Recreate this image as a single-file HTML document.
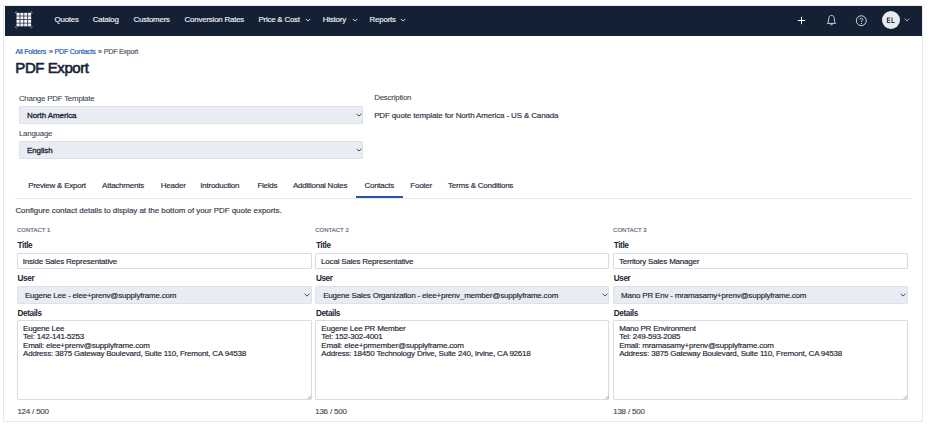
<!DOCTYPE html>
<html><head><meta charset="utf-8">
<style>
*{box-sizing:border-box;margin:0;padding:0}
html,body{width:933px;height:427px;overflow:hidden;background:#fff;font-family:"Liberation Sans",sans-serif;}
.a{position:absolute;white-space:nowrap;line-height:1}
#frame{position:absolute;left:3.1px;top:5.2px;width:920.2px;height:416.4px;border:1px solid #e7e8ea;}
#nav{position:absolute;left:4.7px;top:6.1px;width:917.1px;height:29.5px;background:#142135;}
.nv{color:#eef1f5;font-size:7.9px;letter-spacing:-0.2px;top:15.6px;-webkit-text-stroke:0.15px #eef1f5}
.chev{position:absolute;width:3px;height:3px;border-right:1px solid #e6e9ee;border-bottom:1px solid #e6e9ee;transform:rotate(45deg)}
.bc{font-size:7.2px;top:47.8px;letter-spacing:-0.3px;-webkit-text-stroke:0.2px currentColor}
.lbl{font-size:7.9px;color:#3c4350;letter-spacing:-0.22px;-webkit-text-stroke:0.08px #3c4350}
.sel{position:absolute;background:#e9edf3;border:1px solid #dde2ea;border-radius:1px}
.selt{font-size:8px;color:#1c2434;letter-spacing:-0.1px;-webkit-text-stroke:0.3px #1c2434}
.tab{font-size:8px;color:#1f2a3d;top:182px;letter-spacing:-0.24px;-webkit-text-stroke:0.15px #1f2a3d}
.ct{font-size:5.9px;color:#5a6a82;letter-spacing:0.08px;top:227.9px;-webkit-text-stroke:0.18px #5a6a82}
.fl{font-size:8.2px;color:#1d2536;font-weight:bold;letter-spacing:-0.4px}
.inp{position:absolute;background:#fff;border:1px solid #d9dde3;border-radius:1px}
.it{font-size:8px;color:#1f2634;letter-spacing:-0.2px;-webkit-text-stroke:0.16px #1f2634}
.cnt{font-size:8px;color:#474e5b;letter-spacing:-0.3px;word-spacing:0.3px;top:407.9px;-webkit-text-stroke:0.16px #474e5b}
</style></head><body>
<div id="frame"></div>
<div id="nav"></div>
<!-- logo -->
<svg class="a" style="left:14px;top:10px" width="20" height="20" viewBox="0 0 20 20">
  <g fill="#f4f6f9"><rect x="2.50" y="2.80" width="3.1" height="2.9"/><rect x="6.35" y="2.80" width="3.1" height="2.9"/><rect x="10.20" y="2.80" width="3.1" height="2.9"/><rect x="14.05" y="2.80" width="3.1" height="2.9"/><rect x="2.50" y="6.35" width="3.1" height="2.9"/><rect x="6.35" y="6.35" width="3.1" height="2.9"/><rect x="10.20" y="6.35" width="3.1" height="2.9"/><rect x="14.05" y="6.35" width="3.1" height="2.9"/><rect x="2.50" y="9.90" width="3.1" height="2.9"/><rect x="6.35" y="9.90" width="3.1" height="2.9"/><rect x="10.20" y="9.90" width="3.1" height="2.9"/><rect x="14.05" y="9.90" width="3.1" height="2.9"/><rect x="2.50" y="13.45" width="3.1" height="2.9"/><rect x="6.35" y="13.45" width="3.1" height="2.9"/><rect x="10.20" y="13.45" width="3.1" height="2.9"/><rect x="14.05" y="13.45" width="3.1" height="2.9"/></g>
  <g stroke="#9aa3b3" stroke-width="0.8" fill="none"><path d="M1.2 3.3A1.7 1.7 0 0 1 2.9 1.6"/><path d="M16.5 1.6A1.7 1.7 0 0 1 18.2 3.3"/><path d="M1.2 16.4A1.7 1.7 0 0 0 2.9 18.1"/><path d="M16.5 18.1A1.7 1.7 0 0 0 18.2 16.4"/></g>
</svg>
<span class="a nv" style="left:54.5px">Quotes</span>
<span class="a nv" style="left:92.8px">Catalog</span>
<span class="a nv" style="left:133.5px">Customers</span>
<span class="a nv" style="left:184.6px">Conversion Rates</span>
<span class="a nv" style="left:258.4px">Price &amp; Cost</span>
<svg class="a" style="left:304.7px;top:17.8px" width="6" height="4" viewBox="0 0 6 4"><path d="M0.8 0.9L3 3.1L5.2 0.9" stroke="#e3e7ee" stroke-width="0.9" fill="none"/></svg>
<span class="a nv" style="left:322.8px">History</span>
<svg class="a" style="left:351.6px;top:17.8px" width="6" height="4" viewBox="0 0 6 4"><path d="M0.8 0.9L3 3.1L5.2 0.9" stroke="#e3e7ee" stroke-width="0.9" fill="none"/></svg>
<span class="a nv" style="left:369.6px">Reports</span>
<svg class="a" style="left:399.8px;top:17.8px" width="6" height="4" viewBox="0 0 6 4"><path d="M0.8 0.9L3 3.1L5.2 0.9" stroke="#e3e7ee" stroke-width="0.9" fill="none"/></svg>
<!-- right icons -->
<svg class="a" style="left:796px;top:15px" width="11" height="11" viewBox="0 0 11 11"><path d="M5.5 1.8V9.2M1.8 5.5H9.2" stroke="#fff" stroke-width="1"/></svg>
<svg class="a" style="left:825px;top:14px" width="13" height="13" viewBox="0 0 13 13"><path d="M6.5 1.4C4.6 1.4 3.8 2.8 3.7 4.6L3.5 7.3C3.4 8.3 2.8 8.9 2.3 9.4H10.7C10.2 8.9 9.6 8.3 9.5 7.3L9.3 4.6C9.2 2.8 8.4 1.4 6.5 1.4Z" stroke="#e9ecf1" stroke-width="0.85" fill="none" stroke-linejoin="round"/><path d="M5.5 9.8A1 1 0 0 0 7.5 9.8" stroke="#e9ecf1" stroke-width="0.85" fill="none"/></svg>
<svg class="a" style="left:855px;top:14.5px" width="13" height="13" viewBox="0 0 13 13"><circle cx="6.3" cy="5.7" r="4.95" stroke="#e9ecf1" stroke-width="0.9" fill="none"/><path d="M4.8 4.6C4.8 3.7 5.5 3.2 6.3 3.2S7.8 3.7 7.8 4.5C7.8 5.5 6.4 5.7 6.4 7" stroke="#e9ecf1" stroke-width="0.9" fill="none"/><circle cx="6.4" cy="8.4" r="0.55" fill="#e9ecf1"/></svg>
<div class="a" style="left:881.8px;top:10.7px;width:18px;height:18px;border-radius:50%;background:#e8ebf0"></div>
<svg class="a" style="left:886px;top:17px" width="10" height="7" viewBox="0 0 10 7"><path d="M1.4 0.5V5.9M0.9 1H4.3M1.4 3.2H4M0.9 5.4H4.4M6 0.5V5.9M5.5 5.4H8.7" stroke="#2a3242" stroke-width="1.05" fill="none"/></svg>
<svg class="a" style="left:903.5px;top:18.2px" width="6" height="4" viewBox="0 0 6 4"><path d="M0.7 0.7L3 2.9L5.3 0.7" stroke="#c3c9d3" stroke-width="0.9" fill="none"/></svg>

<!-- breadcrumb -->
<span class="a bc" style="left:15.4px;color:#2b5fb4">All Folders</span>
<span class="a bc" style="left:49px;color:#555c68">»</span>
<span class="a bc" style="left:54.5px;color:#2b5fb4">PDF Contacts</span>
<span class="a bc" style="left:98px;color:#555c68">»</span>
<span class="a bc" style="left:103.8px;color:#555c68">PDF Export</span>
<span class="a" style="left:15.3px;top:59.8px;font-size:15px;color:#18213a;letter-spacing:-0.42px;-webkit-text-stroke:0.6px #18213a">PDF Export</span>

<!-- template form -->
<span class="a lbl" style="left:18.9px;top:94.5px">Change PDF Template</span>
<div class="sel" style="left:18.9px;top:106.2px;width:344px;height:17.4px"></div>
<span class="a selt" style="left:27px;top:111.5px">North America</span>
<svg class="a" style="left:355.6px;top:113.2px" width="6" height="4" viewBox="0 0 6 4"><path d="M0.6 0.7L3 3.1L5.4 0.7" stroke="#39414f" stroke-width="0.95" fill="none"/></svg>
<span class="a lbl" style="left:18.9px;top:129.7px">Language</span>
<div class="sel" style="left:18.9px;top:141.4px;width:344px;height:17.4px"></div>
<span class="a selt" style="left:27px;top:146.6px">English</span>
<svg class="a" style="left:355.6px;top:148.3px" width="6" height="4" viewBox="0 0 6 4"><path d="M0.6 0.7L3 3.1L5.4 0.7" stroke="#39414f" stroke-width="0.95" fill="none"/></svg>
<span class="a lbl" style="left:374.2px;top:94px">Description</span>
<span class="a it" style="left:374.2px;top:111.6px;color:#333a47;letter-spacing:-0.15px">PDF quote template for North America - US &amp; Canada</span>

<!-- tabs -->
<span class="a tab" style="left:28.3px">Preview &amp; Export</span>
<span class="a tab" style="left:102.1px">Attachments</span>
<span class="a tab" style="left:160.8px">Header</span>
<span class="a tab" style="left:200.3px">Introduction</span>
<span class="a tab" style="left:257.4px">Fields</span>
<span class="a tab" style="left:292.9px">Additional Notes</span>
<span class="a tab" style="left:364.4px">Contacts</span>
<span class="a tab" style="left:410.3px">Footer</span>
<span class="a tab" style="left:448.1px">Terms &amp; Conditions</span>
<div class="a" style="left:14.9px;top:197.6px;width:896.4px;height:1px;background:#e3e6ea"></div>
<div class="a" style="left:356.3px;top:196px;width:46.8px;height:2px;background:#2456a8"></div>

<span class="a it" style="left:15.4px;top:206.8px;color:#434954;letter-spacing:-0.06px">Configure contact details to display at the bottom of your PDF quote exports.</span>

<!-- contacts -->
<span class="a ct" style="left:16.9px">CONTACT 1</span>
<span class="a ct" style="left:315.2px">CONTACT 2</span>
<span class="a ct" style="left:613.1px">CONTACT 3</span>

<span class="a fl" style="left:17.6px;top:241.9px">Title</span>
<span class="a fl" style="left:315.9px;top:241.9px">Title</span>
<span class="a fl" style="left:613.8px;top:241.9px">Title</span>

<div class="inp" style="left:16.9px;top:253.1px;width:294.7px;height:15.8px"></div>
<div class="inp" style="left:315.2px;top:253.1px;width:294.3px;height:15.8px"></div>
<div class="inp" style="left:613.1px;top:253.1px;width:294.6px;height:15.8px"></div>
<span class="a it" style="left:22.8px;top:257.5px">Inside Sales Representative</span>
<span class="a it" style="left:321.1px;top:257.5px">Local Sales Representative</span>
<span class="a it" style="left:619px;top:257.5px">Territory Sales Manager</span>

<span class="a fl" style="left:17.6px;top:275px">User</span>
<span class="a fl" style="left:315.9px;top:275px">User</span>
<span class="a fl" style="left:613.8px;top:275px">User</span>

<div class="sel" style="left:16.9px;top:286.4px;width:294.7px;height:17.3px"></div>
<div class="sel" style="left:315.2px;top:286.4px;width:294.3px;height:17.3px"></div>
<div class="sel" style="left:613.1px;top:286.4px;width:294.6px;height:17.3px"></div>
<span class="a it" style="left:24.9px;top:291.6px">Eugene Lee - elee+prenv@supplyframe.com</span>
<span class="a it" style="left:323.2px;top:291.6px">Eugene Sales Organization - elee+prenv_member@supplyframe.com</span>
<span class="a it" style="left:621.1px;top:291.6px">Mano PR Env - mramasamy+prenv@supplyframe.com</span>
<svg class="a" style="left:304.2px;top:293.0px" width="6" height="4" viewBox="0 0 6 4"><path d="M0.6 0.7L3 3.1L5.4 0.7" stroke="#39414f" stroke-width="0.95" fill="none"/></svg>
<svg class="a" style="left:602.0px;top:293.0px" width="6" height="4" viewBox="0 0 6 4"><path d="M0.6 0.7L3 3.1L5.4 0.7" stroke="#39414f" stroke-width="0.95" fill="none"/></svg>
<svg class="a" style="left:900.4px;top:293.0px" width="6" height="4" viewBox="0 0 6 4"><path d="M0.6 0.7L3 3.1L5.4 0.7" stroke="#39414f" stroke-width="0.95" fill="none"/></svg>

<span class="a fl" style="left:17.6px;top:309.5px">Details</span>
<span class="a fl" style="left:315.9px;top:309.5px">Details</span>
<span class="a fl" style="left:613.8px;top:309.5px">Details</span>

<div class="inp" style="left:16.9px;top:320.2px;width:294.7px;height:80.1px"></div>
<div class="inp" style="left:315.2px;top:320.2px;width:294.3px;height:80.1px"></div>
<div class="inp" style="left:613.1px;top:320.2px;width:294.6px;height:80.1px"></div>

<div class="a it" style="left:23px;top:324.6px;line-height:8.6px;white-space:pre">Eugene Lee
Tel: 142-141-5253
Email: elee+prenv@supplyframe.com
Address: 3875 Gateway Boulevard, Suite 110, Fremont, CA 94538</div>
<div class="a it" style="left:321.3px;top:324.6px;line-height:8.6px;white-space:pre">Eugene Lee PR Member
Tel: 152-302-4001
Email: elee+prmember@supplyframe.com
Address: 18450 Technology Drive, Suite 240, Irvine, CA 92618</div>
<div class="a it" style="left:619.2px;top:324.6px;line-height:8.6px;white-space:pre">Mano PR Environment
Tel: 249-593-2085
Email: mramasamy+prenv@supplyframe.com
Address: 3875 Gateway Boulevard, Suite 110, Fremont, CA 94538</div>

<svg class="a" style="left:305.6px;top:393.6px" width="6" height="6" viewBox="0 0 6 6"><path d="M1.5 5L5 1.5M3.4 5L5 3.4" stroke="#858b94" stroke-width="0.7"/></svg>
<svg class="a" style="left:603.5px;top:393.6px" width="6" height="6" viewBox="0 0 6 6"><path d="M1.5 5L5 1.5M3.4 5L5 3.4" stroke="#858b94" stroke-width="0.7"/></svg>
<svg class="a" style="left:901.7px;top:393.6px" width="6" height="6" viewBox="0 0 6 6"><path d="M1.5 5L5 1.5M3.4 5L5 3.4" stroke="#858b94" stroke-width="0.7"/></svg>
<span class="a cnt" style="left:17.4px">124 / 500</span>
<span class="a cnt" style="left:315.3px">136 / 500</span>
<span class="a cnt" style="left:613.3px">138 / 500</span>
</body></html>
